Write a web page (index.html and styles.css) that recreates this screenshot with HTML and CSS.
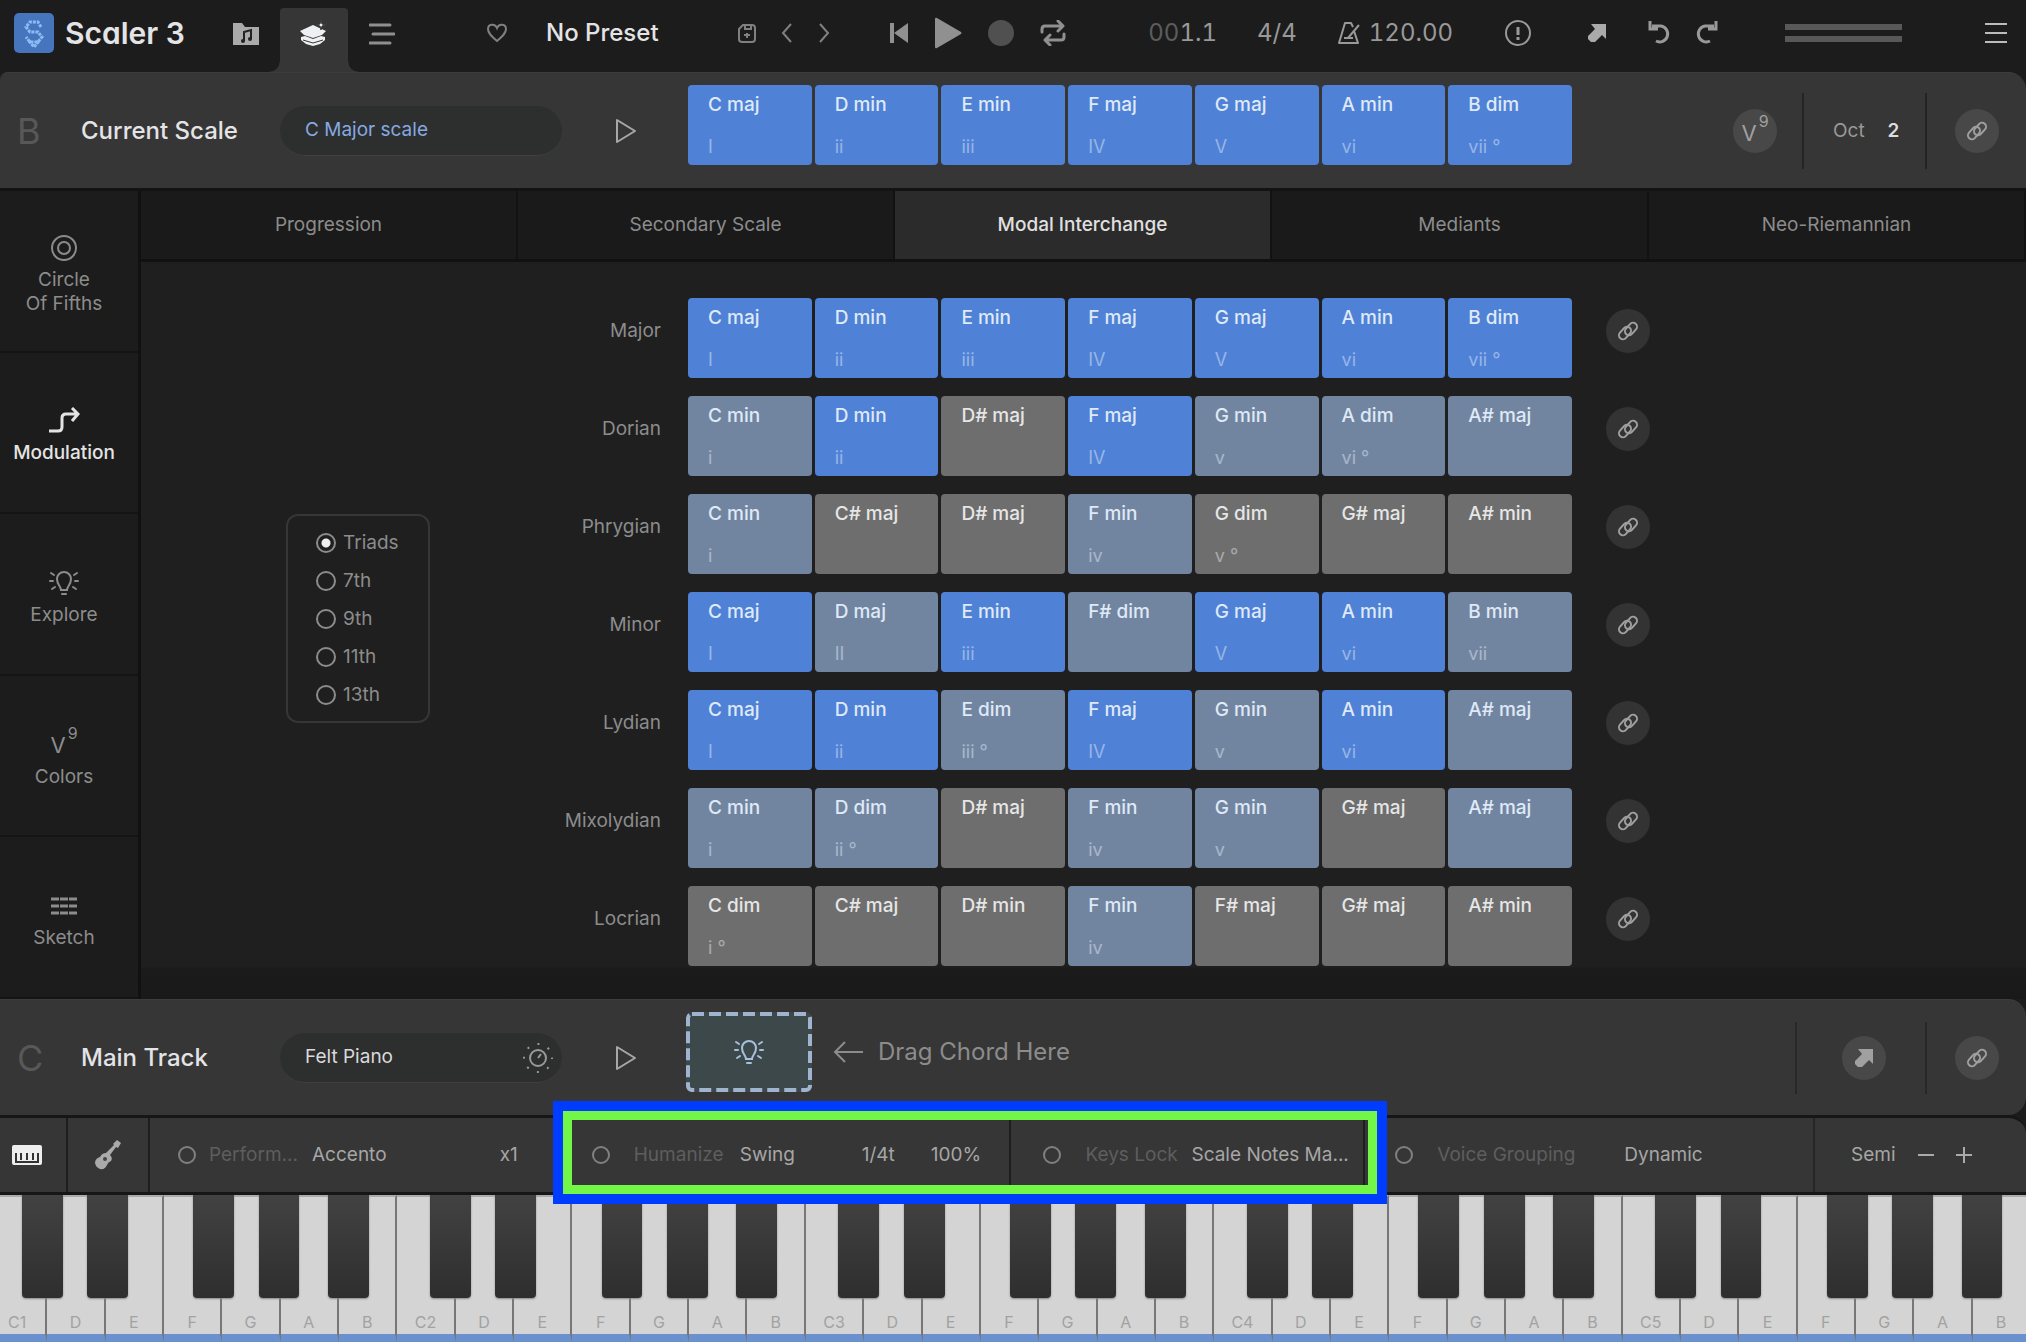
FILE: index.html
```html
<!DOCTYPE html>
<html lang="en">
<head>
    <meta charset="UTF-8">
    <meta name="viewport" content="width=device-width, initial-scale=1.0">
    <title>Scaler 3</title>
    <link rel="stylesheet" href="styles.css">
</head>
<body>
    <!-- shared icons -->
    <svg class="defs" width="0" height="0" aria-hidden="true">
        <symbol id="i-link" viewBox="0 0 24 24">
            <g fill="none" stroke="currentColor" stroke-width="2">
                <rect x="2" y="10" width="14" height="8" rx="4" transform="rotate(-48 9 14)"/>
                <rect x="8" y="6" width="14" height="8" rx="4" transform="rotate(-48 15 10)"/>
            </g>
        </symbol>
        <symbol id="i-play" viewBox="0 0 24 28">
            <path d="M3 3v22l18-11z" fill="none" stroke="currentColor" stroke-width="2" stroke-linejoin="round"/>
        </symbol>
        <symbol id="i-arrow" viewBox="0 0 20 20">
            <path d="M4 1h15v15l-4-4-7 7h-4l-3-3v-3l7-7z" fill="currentColor"/>
        </symbol>
        <symbol id="i-bulb" viewBox="0 0 32 28">
            <g fill="none" stroke="currentColor" stroke-width="2" stroke-linecap="round">
                <path d="M13 21c0-4-4-5-4-11a7 7 0 0 1 14 0c0 6-4 7-4 11z"/>
                <path d="M14 25h4M2 12h3M27 12h3M3 4l3 2M29 4l-3 2M4 20l3-2M28 20l-3-2"/>
            </g>
        </symbol>
    </svg>

    <header class="topbar">
        <div class="brand">
            <svg class="logo" width="40" height="40" viewBox="0 0 40 40">
                <rect width="40" height="40" rx="5" fill="#4775bd"/>
                <g fill="none" stroke="#8fbbf5" stroke-width="3" stroke-dasharray="3 1">
                    <path d="M27 14l-3-5h-8l-4 5 4 5h8l4 5-4 5h-8l-4-5"/>
                    <path d="M15 28l5 6 5-6"/>
                </g>
            </svg>
            <h1>Scaler 3</h1>
        </div>
        <nav class="views">
            <button aria-label="Browser">
                <svg width="26" height="24" viewBox="0 0 26 24"><path d="M0 1h9l3 4h14v18H0z" fill="#aaa"/><path d="M11 19v-9l7-2v9" fill="none" stroke="#222" stroke-width="2"/><circle cx="10" cy="19" r="2" fill="#222"/><circle cx="17" cy="17" r="2" fill="#222"/></svg>
            </button>
            <button class="active" aria-label="Create">
                <svg width="28" height="28" viewBox="0 0 28 28" fill="#eef0f4"><path d="M13 5l13 6-4 4-9 3-9-3-4-4z"/><path d="M1 17l4-1 8 3 8-3 4 1v3l-5 4-7 2-7-2-5-4z"/><path d="M3 20l10 3 10-3" fill="none" stroke="#363636"/><path d="M21 0l1 4 4 1-4 1-1 4-1-4-4-1 4-1z" stroke="#363636"/></svg>
            </button>
            <button aria-label="Arrange">
                <svg width="26" height="22" viewBox="0 0 26 22"><path d="M1 2h20M4 11h21M1 20h20" stroke="#8f8f8f" stroke-width="3" stroke-linecap="round"/></svg>
            </button>
        </nav>
        <div class="preset">
            <button aria-label="Favourite">
                <svg width="20" height="20" viewBox="0 0 20 20"><path d="M10 18C4 13 1 10 1 6c0-5 7-6 9-1 2-5 9-4 9 1 0 4-3 7-9 12z" fill="none" stroke="#808080" stroke-width="2"/></svg>
            </button>
            <span class="preset-name">No Preset</span>
            <button aria-label="Save preset">
                <svg width="18" height="20" viewBox="0 0 18 20"><path d="M5 2h9q3 0 3 3v11q0 3-3 3H4q-3 0-3-3V6z" fill="none" stroke="#808080" stroke-width="2"/><path d="M7 2v4h6V2M9 10v5M6 12h6" fill="none" stroke="#808080" stroke-width="2"/></svg>
            </button>
            <button aria-label="Previous preset">
                <svg width="12" height="20" viewBox="0 0 12 20"><path d="M10 1L2 10l8 9" fill="none" stroke="#808080" stroke-width="2"/></svg>
            </button>
            <button aria-label="Next preset">
                <svg width="12" height="20" viewBox="0 0 12 20"><path d="M2 1l8 9-8 9" fill="none" stroke="#808080" stroke-width="2"/></svg>
            </button>
        </div>
        <div class="transport">
            <button aria-label="Rewind">
                <svg width="18" height="20" viewBox="0 0 18 20" fill="#909090"><path d="M0 0h4v20H0zM18 0v20L4 10z"/></svg>
            </button>
            <button aria-label="Play">
                <svg width="28" height="32" viewBox="0 0 28 32"><path d="M1 2v28q0 2 2 1L27 17q1-1 0-2L3 1Q1 0 1 2z" fill="#909090"/></svg>
            </button>
            <button aria-label="Record">
                <svg width="26" height="26" viewBox="0 0 26 26"><circle cx="13" cy="13" r="13" fill="#505050"/></svg>
            </button>
            <button aria-label="Loop">
                <svg width="26" height="26" viewBox="0 0 26 26" fill="none" stroke="#909090" stroke-width="3" stroke-linecap="round" stroke-linejoin="round"><path d="M2 12V9q0-3 3-3h18M18 1l5 5-5 5M24 14v3q0 3-3 3H6M10 15l-5 5 5 5"/></svg>
            </button>
        </div>
        <div class="clock">
            <span class="position"><i>00</i>1.1</span>
            <span>4/4</span>
            <span class="tempo">
                <svg width="24" height="22" viewBox="0 0 24 22" fill="none" stroke="#999" stroke-width="2" stroke-linejoin="round"><path d="M17 9l4 12H2L8 1h6l2 4M11 16L22 3M7 16h9"/></svg>
                120.00
            </span>
        </div>
        <div class="actions">
            <button aria-label="Panic">
                <svg width="26" height="26" viewBox="0 0 26 26"><circle cx="13" cy="13" r="12" fill="none" stroke="#999" stroke-width="2"/><path d="M13 7v8M13 17v3" stroke="#999" stroke-width="3"/></svg>
            </button>
            <button aria-label="Export"><svg width="20" height="20" color="#aaa"><use href="#i-arrow"/></svg></button>
            <button aria-label="Undo">
                <svg width="26" height="24" viewBox="0 0 26 24" fill="none" stroke="#999" stroke-width="3"><path d="M5 5h9a8 8 0 1 1-5 15M3 0v8h8"/></svg>
            </button>
            <button aria-label="Redo">
                <svg width="26" height="24" viewBox="0 0 26 24" fill="none" stroke="#999" stroke-width="3"><path d="M21 5h-9a8 8 0 1 0 5 15M23 0v8h-8"/></svg>
            </button>
            <div class="meter"></div>
            <button aria-label="Menu">
                <svg width="24" height="22" viewBox="0 0 24 22"><path d="M1 2h22M1 11h22M1 20h22" stroke="#bbb" stroke-width="2"/></svg>
            </button>
        </div>
    </header>

    <section class="strip">
        <span class="letter">B</span>
        <h2>Current Scale</h2>
        <div class="pill">
            <select class="blue" aria-label="Scale"><option>C Major scale</option></select>
        </div>
        <button class="play" aria-label="Play scale"><svg width="24" height="28"><use href="#i-play"/></svg></button>
        <div class="chords" id="scaleChords"></div>
        <div class="strip-end">
            <button class="round voicing" aria-label="Chord colors">V<sup>9</sup></button>
            <div class="octave-box">
                <label for="oct">Oct</label>
                <input type="text" id="oct" value="2">
            </div>
            <button class="round" aria-label="Link"><svg width="24" height="24"><use href="#i-link"/></svg></button>
        </div>
    </section>

    <main class="workspace">
        <nav class="sidebar">
            <button>
                <svg width="28" height="28" viewBox="0 0 28 28" fill="none" stroke="currentColor" stroke-width="2"><circle cx="14" cy="14" r="12"/><circle cx="14" cy="14" r="6"/></svg>
                Circle<br>Of Fifths
            </button>
            <button class="active">
                <svg width="32" height="28" viewBox="0 0 32 28" fill="none" stroke="currentColor" stroke-width="3"><path d="M1 24h9q4 0 4-4v-9q0-4 4-4h12M24 1l6 6-6 7"/></svg>
                Modulation
            </button>
            <button>
                <svg width="32" height="28"><use href="#i-bulb"/></svg>
                Explore
            </button>
            <button>
                <span class="voicing">V<sup>9</sup></span>
                Colors
            </button>
            <button>
                <svg width="28" height="28" viewBox="0 0 28 28"><path d="M1 7h26M1 14h26M1 21h26" stroke="currentColor" stroke-width="3" stroke-dasharray="8 1"/></svg>
                Sketch
            </button>
        </nav>
        <div class="content">
            <div class="tabs">
                <button>Progression</button>
                <button>Secondary Scale</button>
                <button class="active">Modal Interchange</button>
                <button>Mediants</button>
                <button>Neo-Riemannian</button>
            </div>
            <div class="modes">
                <div class="chord-size">
                    <label><input type="radio" name="size" checked>Triads</label>
                    <label><input type="radio" name="size">7th</label>
                    <label><input type="radio" name="size">9th</label>
                    <label><input type="radio" name="size">11th</label>
                    <label><input type="radio" name="size">13th</label>
                </div>
                <div class="mode-list" id="modeList"></div>
            </div>
        </div>
    </main>

    <section class="strip track">
        <span class="letter">C</span>
        <h2>Main Track</h2>
        <div class="pill">
            <select aria-label="Instrument"><option>Felt Piano</option></select>
            <svg width="32" height="32" viewBox="0 0 32 32" fill="none" stroke="#999" stroke-width="2"><circle cx="16" cy="17" r="8"/><path d="M16 17l3-4"/><circle cx="16" cy="17" r="14" stroke-dasharray="2 9" stroke-dashoffset="1"/></svg>
        </div>
        <button class="play" aria-label="Play track"><svg width="24" height="28"><use href="#i-play"/></svg></button>
        <div class="drop">
            <div class="drop-zone">
                <svg class="dash" width="100%" height="100%"><rect x="2" y="2" width="122" height="76" rx="4"/></svg>
                <svg width="32" height="28"><use href="#i-bulb"/></svg>
            </div>
            <svg width="30" height="22" viewBox="0 0 30 22" fill="none" stroke="currentColor" stroke-width="2"><path d="M30 11H2M12 1L2 11l10 10"/></svg>
            <span>Drag Chord Here</span>
        </div>
        <div class="strip-end">
            <div class="export-box">
                <button class="round" aria-label="Export track"><svg width="20" height="20"><use href="#i-arrow"/></svg></button>
            </div>
            <button class="round" aria-label="Link track"><svg width="24" height="24"><use href="#i-link"/></svg></button>
        </div>
    </section>

    <section class="toolbar">
        <button class="tool-icon" aria-label="Keyboard">
            <svg width="30" height="20" viewBox="0 0 30 20"><rect width="30" height="20" rx="2" fill="#eee"/><path d="M4 8v9M9 8v7M15 8v7M21 8v7M26 8v9M3 17h24" stroke="#333" stroke-width="2"/></svg>
        </button>
        <button class="tool-icon guitar" aria-label="Guitar">
            <svg width="26" height="30" viewBox="0 0 26 30" fill="#aaa"><path d="M22 0l4 3-3 5-2-1-6 8q3 3 1 6-3 1-4 4-2 5-7 4-5-2-5-7 1-4 5-5 2-4 6-4l8-8-1-1z"/><circle cx="10" cy="19" r="2" fill="#444"/></svg>
        </button>
        <div class="tool perform">
            <input type="checkbox" id="perform">
            <label for="perform">Perform...</label>
            <select aria-label="Performance"><option>Accento</option></select>
            <select class="rate" aria-label="Rate"><option>x1</option></select>
        </div>
        <div class="tool-group">
            <div class="tool humanize">
                <input type="checkbox" id="humanize">
                <label for="humanize">Humanize</label>
                <select aria-label="Humanize mode"><option>Swing</option></select>
                <select aria-label="Division"><option>1/4t</option></select>
                <select aria-label="Amount"><option>100%</option></select>
            </div>
            <div class="tool keys-lock">
                <input type="checkbox" id="keysLock">
                <label for="keysLock">Keys Lock</label>
                <select aria-label="Lock mode"><option>Scale Notes Ma...</option></select>
            </div>
        </div>
        <div class="tool grouping">
            <input type="checkbox" id="grouping">
            <label for="grouping">Voice Grouping</label>
            <select aria-label="Grouping mode"><option>Dynamic</option></select>
        </div>
        <div class="tool semi">
            <span>Semi</span>
            <button aria-label="Semitone down"><svg width="16" height="16" viewBox="0 0 16 16"><path d="M0 8h16" stroke="#aaa" stroke-width="2"/></svg></button>
            <button aria-label="Semitone up"><svg width="16" height="16" viewBox="0 0 16 16"><path d="M0 8h16M8 0v16" stroke="#aaa" stroke-width="2"/></svg></button>
        </div>
    </section>

    <div class="keyboard"><div class="keys" id="keys"></div></div>

    <script>
        // each chord: name | degree | color (b = in scale, s = shares notes, g = out of scale)
        const modes = {
            'Major': 'C maj|I|b,D min|ii|b,E min|iii|b,F maj|IV|b,G maj|V|b,A min|vi|b,B dim|vii °|b',
            'Dorian': 'C min|i|s,D min|ii|b,D# maj||g,F maj|IV|b,G min|v|s,A dim|vi °|s,A# maj||s',
            'Phrygian': 'C min|i|s,C# maj||g,D# maj||g,F min|iv|s,G dim|v °|g,G# maj||g,A# min||g',
            'Minor': 'C maj|I|b,D maj|II|s,E min|iii|b,F# dim||s,G maj|V|b,A min|vi|b,B min|vii|s',
            'Lydian': 'C maj|I|b,D min|ii|b,E dim|iii °|s,F maj|IV|b,G min|v|s,A min|vi|b,A# maj||s',
            'Mixolydian': 'C min|i|s,D dim|ii °|s,D# maj||g,F min|iv|s,G min|v|s,G# maj||g,A# maj||s',
            'Locrian': 'C dim|i °|g,C# maj||g,D# min||g,F min|iv|s,F# maj||g,G# maj||g,A# min||g'
        };

        function chordRow(row) {
            return row.split(',').map(chord => {
                const [name, degree, color] = chord.split('|');
                return `<button class="chord ${color}"><span>${name}</span><small>${degree}</small></button>`;
            }).join('');
        }

        document.getElementById('scaleChords').innerHTML = chordRow(modes['Major']);

        document.getElementById('modeList').innerHTML = Object.keys(modes).map(mode => `
            <div class="mode">
                <span class="mode-name">${mode}</span>
                <div class="chords">${chordRow(modes[mode])}</div>
                <button class="round" aria-label="Link ${mode}"><svg width="24" height="24"><use href="#i-link"/></svg></button>
            </div>`).join('');

        // piano, C1 to B5
        let html = '';
        for (let octave = 1; octave <= 5; octave++) {
            html += '<div class="octave">';
            ['C' + octave, 'D', 'E', 'F', 'G', 'A', 'B'].forEach(note => {
                html += `<button class="white">${note}</button>`;
            });
            ['cs', 'ds', 'fs', 'gs', 'as'].forEach(note => {
                html += `<button class="black ${note}" aria-label="${note[0].toUpperCase()}#${octave}"></button>`;
            });
            html += '</div>';
        }
        document.getElementById('keys').innerHTML = html;
    </script>
</body>
</html>
```

FILE: styles.css
```css
* {
    box-sizing: border-box;
}
body {
    margin: 0;
    min-height: 100vh;
    display: flex;
    flex-direction: column;
    background: #1c1c1c;
    color: #8c8c8c;
    font-family: Inter, "Liberation Sans", sans-serif;
    font-size: 19px;
    line-height: 24px;
    overflow-x: hidden;
}
button, select, input {
    font: inherit;
    color: inherit;
    background: none;
    border: none;
    margin: 0;
    padding: 0;
}
button {
    cursor: pointer;
}
select {
    appearance: none;
}
svg {
    display: block;
    flex: none;
}
h1, h2 {
    margin: 0;
    color: #e4e4e6;
}
.defs {
    position: absolute;
}

/* top bar */
.topbar {
    display: flex;
    align-items: center;
    height: 72px;
    padding: 0 18px 6px 14px;
}
.brand {
    display: flex;
    align-items: center;
    gap: 11px;
    width: 198px;
}
.brand h1 {
    font-size: 30px;
    font-weight: 600;
    line-height: 40px;
    font-feature-settings: "cv11";
    white-space: nowrap;
}
.views {
    display: flex;
    align-self: stretch;
    margin-bottom: -6px;
}
.views button {
    width: 68px;
    display: flex;
    align-items: center;
    justify-content: center;
    padding-bottom: 5px;
}
.views .active {
    position: relative;
    margin-top: 8px;
    padding-bottom: 13px;
    background: #363636;
    border-radius: 4px 4px 0 0;
}
.views .active::before,
.views .active::after {
    content: "";
    position: absolute;
    bottom: 0;
    width: 10px;
    height: 10px;
}
.views .active::before {
    right: 100%;
    background: radial-gradient(circle at 0 0, transparent 9px, #363636 10px);
}
.views .active::after {
    left: 100%;
    background: radial-gradient(circle at 100% 0, transparent 9px, #363636 10px);
}
.preset {
    display: flex;
    align-items: center;
    gap: 25px;
    margin-left: 71px;
}
.preset-name {
    width: 167px;
    margin-left: 14px;
    font-size: 24px;
    font-weight: 500;
    color: #e4e4e6;
}
.transport {
    display: flex;
    align-items: center;
    gap: 26px;
    margin-left: 60px;
}
.clock {
    display: flex;
    align-items: center;
    gap: 40px;
    margin-left: 75px;
    font-size: 24px;
    font-variant-numeric: tabular-nums;
    color: #999;
}
.clock i {
    font-style: normal;
    color: #5c5c5c;
}
.position {
    width: 76px;
    text-align: right;
}
.tempo {
    display: flex;
    align-items: center;
    gap: 8px;
}
.actions {
    flex: 1;
    display: flex;
    align-items: center;
    justify-content: flex-end;
    gap: 20px;
}
.actions button:first-child {
    margin-right: 36px;
}
.actions button:nth-child(2) {
    margin-right: 20px;
}
.meter {
    width: 117px;
    height: 18px;
    margin: 0 62px 0 46px;
    border: solid #585858;
    border-width: 6px 0;
}

/* scale and track strips */
.strip {
    display: flex;
    align-items: center;
    height: 116px;
    background: #363636;
    border-top: 1px solid #3d3d3d;
    border-radius: 8px 18px 0 0;
}
.letter {
    width: 81px;
    padding-left: 17px;
    font-size: 36px;
    line-height: 40px;
    color: #585858;
}
.strip h2 {
    width: 199px;
    font-size: 24px;
    font-weight: 500;
}
.pill {
    width: 282px;
    height: 50px;
    display: flex;
    align-items: center;
    justify-content: space-between;
    padding: 0 8px 0 25px;
    background: #2d2e2e;
    border-radius: 25px;
    border-bottom: 1px solid #3f3f3f;
    color: #dadada;
}
.pill .blue {
    color: #86a9e2;
}
.play {
    margin: 0 50px 0 52px;
    color: #a8a8a8;
}
.chords {
    flex: none;
    width: 884px;
    display: grid;
    grid-template-columns: repeat(7, 1fr);
    gap: 3px;
}
.strip .chords,
.drop {
    margin-bottom: 12px;
}
.chord {
    height: 80px;
    display: flex;
    flex-direction: column;
    justify-content: space-between;
    align-items: flex-start;
    padding: 8px 20px 6px;
    border-radius: 4px;
    color: #dfe9f7;
    font-weight: 500;
    text-align: left;
}
.chord small {
    height: 24px;
    font-size: 18px;
    font-weight: 400;
    opacity: 0.5;
}
.chord.b {
    background: #4f81d6;
}
.chord.s {
    background: #7285a0;
}
.chord.g {
    background: #6e6e6e;
    color: #e6e6e6;
}
.strip-end {
    display: flex;
    align-items: center;
    margin-left: auto;
    padding-right: 27px;
}
.round {
    flex: none;
    width: 44px;
    height: 44px;
    display: flex;
    align-items: center;
    justify-content: center;
    background: #484848;
    border-radius: 50%;
    color: #a0a0a0;
}
.voicing {
    font-size: 22px;
    line-height: 28px;
}
.voicing sup {
    margin-left: 2px;
    font-size: 16px;
    line-height: 0;
    vertical-align: 14px;
}
.round.voicing {
    display: block;
    padding-top: 4px;
}
.octave-box {
    display: flex;
    align-items: center;
    gap: 23px;
    width: 125px;
    height: 76px;
    margin: 0 28px 0 25px;
    padding-left: 29px;
    border: solid #242424;
    border-width: 0 2px;
    color: #999;
}
.octave-box input {
    width: 20px;
    font-weight: 600;
    color: #ddd;
}

/* workspace */
.workspace {
    flex: 1;
    display: flex;
    border-top: 3px solid #131313;
}
.sidebar {
    width: 141px;
    display: flex;
    flex-direction: column;
    border-right: 3px solid #111;
}
.sidebar button {
    flex: 1;
    display: flex;
    flex-direction: column;
    align-items: center;
    justify-content: center;
    padding: 8px 10px 0 0;
    border-bottom: 2px solid #141414;
}
.sidebar svg,
.sidebar .voicing {
    margin-bottom: 6px;
}
.sidebar .active {
    font-weight: 500;
    color: #e4e4e4;
}
.content {
    flex: 1;
    display: flex;
    flex-direction: column;
    background: #1f1f1f;
}
.tabs {
    display: grid;
    grid-template-columns: repeat(5, 1fr);
    height: 71px;
    background: #1a1a1a;
    border-bottom: 3px solid #111;
}
.tabs button {
    border-right: 2px solid #121212;
}
.tabs .active {
    background: #2b2b2b;
    color: #e0e0e0;
    font-weight: 500;
}
.modes {
    flex: 1;
    display: flex;
    align-items: center;
    padding-top: 2px;
    background: linear-gradient(to top, #191919, #1b1b1b 31px, #1f1f1f 32px);
}
.chord-size {
    display: flex;
    flex-direction: column;
    gap: 14px;
    width: 144px;
    margin: 0 0 27px 145px;
    padding: 15px 0 14px 28px;
    border: 2px solid #363636;
    border-radius: 12px;
}
.chord-size label {
    display: flex;
    align-items: center;
    gap: 7px;
}
.chord-size input {
    appearance: none;
    width: 20px;
    height: 20px;
    border: 2px solid #8c8c8c;
    border-radius: 50%;
}
.chord-size input:checked {
    background: radial-gradient(circle, #eee 4px, transparent 5px);
}
.mode-list {
    display: flex;
    flex-direction: column;
    gap: 18px;
}
.mode {
    display: flex;
    align-items: center;
}
.mode-name {
    width: 258px;
    padding: 0 27px 14px 0;
    text-align: right;
}
.mode .round {
    margin: 0 0 14px 34px;
    background: #333;
}

/* main track */
.track {
    border-radius: 0 18px 18px 0;
}
.drop {
    display: flex;
    align-items: center;
    font-size: 24px;
}
.drop-zone {
    position: relative;
    width: 126px;
    height: 80px;
    display: flex;
    align-items: center;
    justify-content: center;
    margin: 0 21px 0 -2px;
    background: #3d484b;
    border-radius: 6px;
    color: #a9c0dc;
}
.dash {
    position: absolute;
    inset: 0;
    fill: none;
    stroke: #9fb4cf;
    stroke-width: 4;
    stroke-dasharray: 12 5;
}
.drop span {
    margin-left: 15px;
}
.export-box {
    display: flex;
    align-items: center;
    justify-content: center;
    width: 132px;
    height: 72px;
    margin-right: 28px;
    padding-left: 6px;
    border: solid #282828;
    border-width: 0 2px;
}

/* performance toolbar */
.toolbar {
    display: grid;
    grid-template-columns: 68px 82px 417fr 799fr 448fr 213px;
    height: 80px;
    background: #363636;
    border: solid #161616;
    border-width: 3px 0;
    border-radius: 0 18px 0 0;
}
.tool-icon {
    display: flex;
    align-items: center;
    justify-content: center;
    padding-right: 12px;
    border-right: 2px solid #1e1e1e;
}
.tool-icon.guitar {
    padding-right: 0;
}
.tool {
    display: flex;
    align-items: center;
    color: #a6a6a6;
}
.tool input {
    appearance: none;
    width: 18px;
    height: 18px;
    margin-right: 24px;
    border: 2px solid #808080;
    border-radius: 50%;
}
.tool label {
    width: 106px;
    color: #5e5e5e;
    white-space: nowrap;
}
.perform {
    padding: 0 48px 0 28px;
}
.perform input {
    margin-right: 13px;
}
.perform label {
    width: 103px;
}
.rate {
    margin-left: auto;
}
/* focus frame drawn over the neighbouring rows */
.tool-group {
    position: relative;
    display: grid;
    grid-template-columns: 445fr 354fr;
}
.tool-group::after {
    content: "";
    position: absolute;
    z-index: 2;
    inset: -17px -22px -12px -14px;
    border: 10px solid #003cff;
    outline: 9px solid #72f748;
    outline-offset: -19px;
    pointer-events: none;
}
.humanize {
    padding-left: 25px;
    border-right: 2px solid #1e1e1e;
}
.humanize select {
    width: 122px;
}
.humanize select + select {
    width: 69px;
}
.keys-lock {
    padding-left: 32px;
    border-right: 2px solid #1e1e1e;
}
.grouping {
    padding-left: 30px;
}
.grouping label {
    width: 187px;
}
.semi {
    gap: 22px;
    padding-left: 36px;
    border-left: 2px solid #262626;
}

/* piano */
.keyboard {
    height: 147px;
    overflow: hidden;
    background: #161616;
}
.keys {
    display: flex;
    height: 100%;
    margin: 0 -5px 0 -11px;
}
.octave {
    position: relative;
    flex: 1;
    display: flex;
}
.white {
    flex: 1;
    display: flex;
    align-items: flex-end;
    justify-content: center;
    padding-bottom: 0;
    background: #d4d4d4;
    border-top: 2px solid #aaa;
    border-right: 2px solid #777;
    border-bottom: 8px solid #6b90ce;
    font-size: 16px;
    color: #a2a2a2;
}
.black {
    position: absolute;
    top: 0;
    width: 10%;
    height: 103px;
    background: linear-gradient(#424242, #2e2e2e);
    border-radius: 0 0 4px 4px;
    box-shadow: 0 1px 2px #888;
}
.cs {
    left: 8%;
}
.ds {
    left: 24%;
}
.fs {
    left: 50%;
}
.gs {
    left: 66%;
}
.as {
    left: 83%;
}
```
